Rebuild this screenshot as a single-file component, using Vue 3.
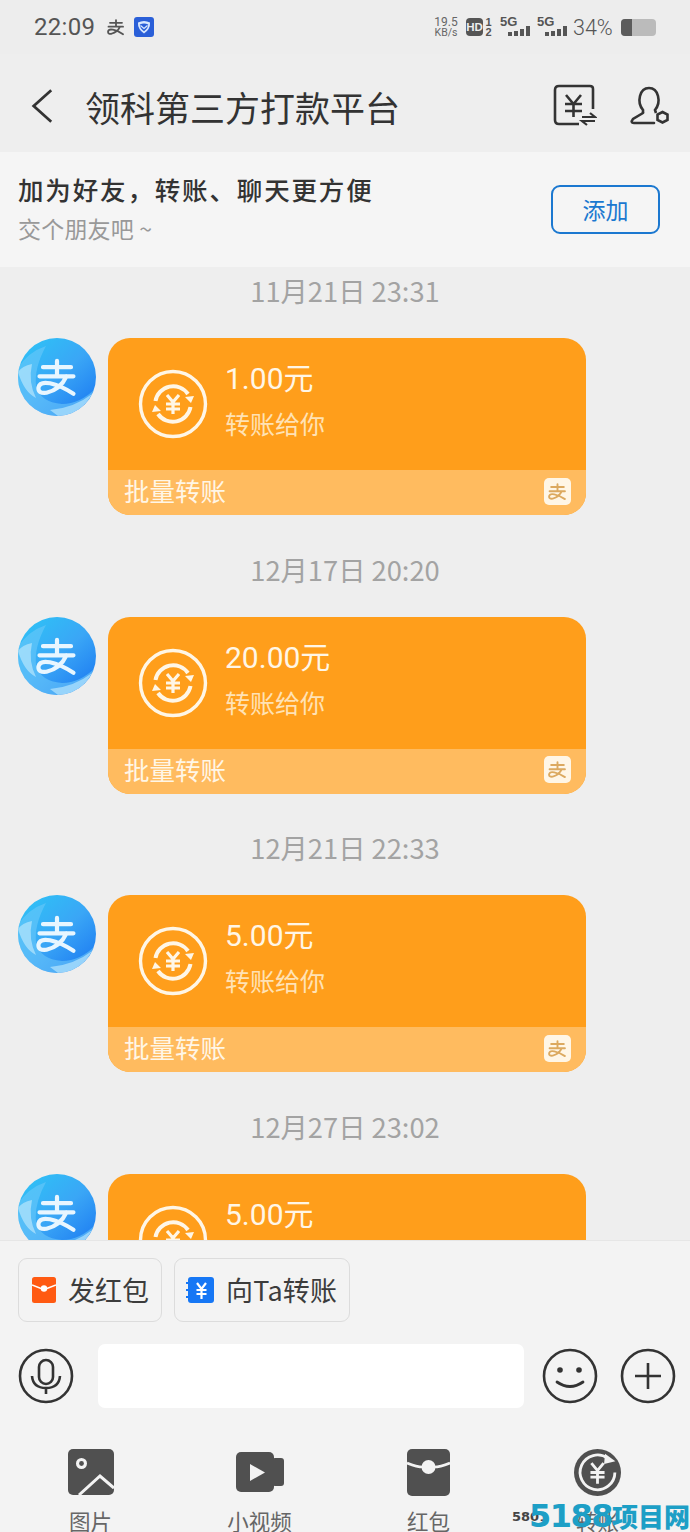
<template>
  <div class="phone">
    <svg class="defs">
      <symbol id="zhi-mark" viewBox="60 70 130 120">
        <path
          d="M85 102H165M75 128H172M125 84V128M152 128Q135 165 95 175Q70 178 72 160Q76 142 105 148Q135 154 172 178"
          fill="none"
          stroke="currentColor"
          stroke-width="12"
          stroke-linecap="round"
        />
      </symbol>
    </svg>

    <div class="status">
      <div class="status-left">
        <span class="clock">22:09</span>
        <svg class="status-zhi"><use href="#zhi-mark" /></svg>
        <svg class="shield" viewBox="0 0 20 20">
          <rect width="20" height="20" rx="3" fill="#2a5fd8" />
          <path d="M4 5.5Q10 2.5 16 5.5Q16.5 12 10 16.5Q3.5 12 4 5.5Z" fill="#d8e8ff" />
          <path d="M5.8 7.4Q10 5.6 14.2 7.4Q14 11.4 10 14.2Q6 11.4 5.8 7.4Z" fill="#2a5fd8" />
          <path d="M6.5 8.6L10 11.4L13.5 8.6" fill="none" stroke="#d8e8ff" stroke-width="1.3" />
        </svg>
      </div>
      <div class="status-right">
        <div class="speed"><span class="speed-num">19.5</span><span>KB/s</span></div>
        <div class="hd">HD</div>
        <div class="sim"><span>1</span><span>2</span></div>
        <div class="signal" v-for="n in 2" :key="n">
          <span class="five-g">5G</span>
          <div class="bars">
            <i v-for="h in [4, 5, 7, 10]" :key="h" :style="{ height: h + 'px' }"></i>
          </div>
        </div>
        <span class="percent">34%</span>
        <div class="battery"><div class="battery-fill"></div></div>
      </div>
    </div>

    <div class="header">
      <svg class="back" viewBox="0 0 26 38">
        <path d="M23 2L4 19L23 36" fill="none" stroke="#333" stroke-width="3" />
      </svg>
      <div class="title">领科第三方打款平台</div>
      <svg class="head-icon bill" viewBox="0 0 44 44">
        <path d="M40 25V5Q40 2 37 2H6Q2 2 2 6V36Q2 40 6 40H26" fill="none" stroke="#333" stroke-width="2.600" />
        <path d="M13 11L20.500 20L28 11M12 20H29M12 27H29M20.500 20V33" fill="none" stroke="#333" stroke-width="2.600" />
        <path d="M29 33H42L37 29M42 37H29L34 41" fill="none" stroke="#333" stroke-width="2.200" />
      </svg>
      <svg class="head-icon person" viewBox="0 0 40 40">
        <path d="M13 27V24Q8 18 10 10Q12 2 19 2Q26 2 28 10Q30 18 25 24L26 27" fill="none" stroke="#333" stroke-width="2.600" />
        <path d="M13 27L3 33Q0 37 4 37H24" fill="none" stroke="#333" stroke-width="2.600" stroke-linecap="round" />
        <path d="M32.500 26L37.500 28.500V34L32.500 36.500L27.500 34V28.500Z" fill="none" stroke="#333" stroke-width="2.600" />
      </svg>
    </div>

    <div class="banner">
      <div>
        <div class="banner-title">加为好友，转账、聊天更方便</div>
        <div class="banner-sub">交个朋友吧 ~</div>
      </div>
      <div class="add-btn">添加</div>
    </div>

    <div class="chat">
      <div class="msg" v-for="m in messages" :key="m.time">
        <div class="time">{{ m.time }}</div>
        <div class="row">
          <svg class="avatar" viewBox="0 0 78 78">
            <defs>
              <linearGradient id="ava-base" x1="0.2" y1="0" x2="0.9" y2="0.8">
                <stop offset="0" stop-color="#2fc0f6" />
                <stop offset="0.55" stop-color="#3aa6f6" />
                <stop offset="1" stop-color="#2283f2" />
              </linearGradient>
              <clipPath id="ava-clip"><circle cx="39" cy="39" r="39" /></clipPath>
            </defs>
            <circle cx="39" cy="39" r="39" fill="url(#ava-base)" />
            <g clip-path="url(#ava-clip)">
              <path d="M0 30Q10 14 28 8Q16 30 18 48Q22 64 44 66Q62 66 78 50V78H0Z" fill="#6fcbf9" opacity="0.55" />
              <path d="M0 34Q6 54 18 60Q10 44 14 26Q4 28 0 34Z" fill="#b6e6fc" opacity="0.7" />
              <path d="M32 72Q56 70 74 56Q62 78 40 78Z" fill="#bfe9fd" opacity="0.65" />
            </g>
            <use href="#zhi-mark" x="16" y="18" width="46" height="42" color="#e8f6ff" />
          </svg>
          <div class="card">
            <div class="card-body">
              <svg class="transfer" viewBox="0 0 70 70">
                <circle cx="35" cy="35" r="32.500" fill="none" stroke="#fff6e6" stroke-width="3.400" />
                <path d="M17.500 32A18 18 0 0 1 50 25" fill="none" stroke="#fff6e6" stroke-width="4" />
                <path d="M52.500 38A18 18 0 0 1 20 45" fill="none" stroke="#fff6e6" stroke-width="4" />
                <path d="M47 28L56 27L53 34Z M23 42L14 43L17 36Z" fill="#fff6e6" />
                <path d="M29 26L35 33L41 26M28 35H42M28 40H42M35 33V45" fill="none" stroke="#fff6e6" stroke-width="3.200" />
              </svg>
              <div>
                <div class="amount">{{ m.amount }}元</div>
                <div class="desc">转账给你</div>
              </div>
            </div>
            <div class="card-foot">
              <span>批量转账</span>
              <svg class="ali-mark" viewBox="0 0 27 27">
                <rect width="27" height="27" rx="5" fill="#fff6e6" />
                <use href="#zhi-mark" x="3" y="4" width="21" height="19" color="#dca95f" />
              </svg>
            </div>
          </div>
        </div>
      </div>
    </div>

    <div class="panel">
      <div class="quick">
        <div class="quick-btn">
          <svg class="quick-icon" viewBox="0 0 24 26">
            <rect width="24" height="26" rx="2.500" fill="#ff5a12" />
            <path d="M0 8L9 11.500H15L24 8" fill="none" stroke="#fff" stroke-width="1.600" />
            <circle cx="12" cy="11.500" r="3.200" fill="#fff" />
          </svg>
          发红包
        </div>
        <div class="quick-btn pay">
          <svg class="quick-icon" viewBox="0 0 28 26">
            <rect x="2" width="26" height="26" rx="3" fill="#1677f5" />
            <path d="M0 6H4M0 13H4M0 20H4" stroke="#1677f5" stroke-width="2" />
            <path d="M11 6L15.500 12L20 6M10.500 13H20.500M10.500 17H20.500M15.500 12V22" fill="none" stroke="#fff" stroke-width="2.200" />
          </svg>
          向Ta转账
        </div>
      </div>

      <div class="input-row">
        <svg class="round-icon voice" viewBox="0 0 56 56">
          <circle cx="28" cy="28" r="26" fill="none" stroke="#333" stroke-width="2.600" />
          <rect x="21" y="12" width="14" height="24" rx="7" fill="none" stroke="#333" stroke-width="2.600" />
          <path d="M14 28Q15 40 28 40Q41 40 42 28M28 40V46" fill="none" stroke="#333" stroke-width="2.600" />
        </svg>
        <div class="input"></div>
        <svg class="round-icon smile" viewBox="0 0 56 56">
          <circle cx="28" cy="28" r="26" fill="none" stroke="#333" stroke-width="2.600" />
          <circle cx="18" cy="22" r="2.800" fill="#333" />
          <circle cx="37" cy="22" r="2.800" fill="#333" />
          <path d="M15 34Q28 43 41 34" fill="none" stroke="#333" stroke-width="2.800" stroke-linecap="round" />
        </svg>
        <svg class="round-icon" viewBox="0 0 56 56">
          <circle cx="28" cy="28" r="26" fill="none" stroke="#333" stroke-width="2.600" />
          <path d="M15 28H41M28 15V41" fill="none" stroke="#333" stroke-width="2.600" />
        </svg>
      </div>

      <div class="tabs">
        <div class="tab">
          <svg class="tab-icon" viewBox="0 0 46 47">
            <rect width="46" height="46" rx="5" fill="#505050" />
            <circle cx="13.500" cy="14.500" r="5.500" fill="#f3f3f3" />
            <circle cx="13.500" cy="14.500" r="2.400" fill="#505050" />
            <path d="M11 46L32 27L46 39" fill="none" stroke="#f3f3f3" stroke-width="3" />
          </svg>
          <span>图片</span>
        </div>
        <div class="tab">
          <svg class="tab-icon" viewBox="0 0 48 47">
            <rect y="3" width="38" height="40" rx="5" fill="#505050" />
            <rect x="36" y="9" width="12" height="28" rx="3" fill="#505050" />
            <path d="M14 15L29 23.500L14 32Z" fill="#f3f3f3" />
          </svg>
          <span>小视频</span>
        </div>
        <div class="tab">
          <svg class="tab-icon" viewBox="0 0 43 47">
            <rect width="43" height="47" rx="5" fill="#505050" />
            <path d="M0 14Q10 18 16 18M27 18Q33 18 43 14" fill="none" stroke="#f3f3f3" stroke-width="2.600" />
            <circle cx="21.500" cy="18" r="7" fill="#f3f3f3" />
          </svg>
          <span>红包</span>
        </div>
        <div class="tab">
          <svg class="tab-icon" viewBox="0 0 50 50">
            <circle cx="25" cy="25" r="25" fill="#505050" />
            <path d="M36 10A18.500 18.500 0 1 0 43.500 25" fill="none" stroke="#f3f3f3" stroke-width="3" />
            <path d="M33 5L44 13L32 16Z" fill="#f3f3f3" />
            <path d="M18.500 15L25 23L31.500 15M17.500 25H32.500M17.500 30H32.500M25 23V37" fill="none" stroke="#f3f3f3" stroke-width="3" />
          </svg>
          <span>转账</span>
        </div>
      </div>
    </div>

    <div class="watermark">
      <span class="wm-small">5801</span>
      <span class="wm-big"><span class="wm-num">5188</span>项目网</span>
    </div>
  </div>
</template>

<script setup>
const messages = [
  { time: "11月21日 23:31", amount: "1.00" },
  { time: "12月17日 20:20", amount: "20.00" },
  { time: "12月21日 22:33", amount: "5.00" },
  { time: "12月27日 23:02", amount: "5.00" },
];
</script>

<style>
html,
body {
  overflow: hidden;
}
</style>

<style scoped>
.phone {
  position: relative;
  display: flex;
  flex-direction: column;
  width: 690px;
  height: 1532px;
  overflow: hidden;
  background: #eeeeee;
  font-family: "Noto Sans CJK SC", "Noto Sans", sans-serif;
}

.defs {
  position: absolute;
  width: 0;
  height: 0;
}

.status {
  flex: none;
  display: flex;
  justify-content: space-between;
  align-items: center;
  height: 54px;
  padding: 0 34px;
  background: #ededed;
  color: #555;
}

.status-left,
.status-right {
  display: flex;
  align-items: center;
}

.clock {
  font-family: Roboto, sans-serif;
  font-size: 24px;
  letter-spacing: 0.3px;
}

.status-zhi {
  width: 20px;
  height: 18px;
  margin-left: 11px;
}

.shield {
  width: 20px;
  height: 20px;
  margin-left: 8px;
}

.speed {
  display: flex;
  flex-direction: column;
  align-items: center;
  width: 24px;
  font-family: Roboto, sans-serif;
  font-size: 10.500px;
  line-height: 10px;
  color: #666;
}

.speed-num {
  font-size: 12px;
  line-height: 12px;
}

.hd {
  width: 17px;
  height: 18px;
  margin-left: 8px;
  border-radius: 4px;
  background: #555;
  color: #eee;
  font-family: "Liberation Sans", sans-serif;
  font-size: 11.500px;
  font-weight: 700;
  line-height: 18px;
  text-align: center;
}

.sim {
  display: flex;
  flex-direction: column;
  width: 9px;
  margin-left: 1px;
  font-family: "Liberation Sans", sans-serif;
  font-size: 11px;
  font-weight: 700;
  line-height: 10px;
  text-align: center;
}

.signal {
  position: relative;
  width: 30px;
  height: 20px;
  margin-left: 7px;
}

.five-g {
  position: absolute;
  top: -3px;
  left: 0;
  font-family: "Liberation Sans", sans-serif;
  font-size: 13px;
  font-weight: 700;
}

.bars {
  position: absolute;
  right: 0;
  bottom: 1px;
  display: flex;
  align-items: flex-end;
  gap: 2px;
}

.bars i {
  display: block;
  width: 4px;
  background: #555;
}

.percent {
  width: 41px;
  margin-left: 6px;
  font-family: Roboto, sans-serif;
  font-size: 21.500px;
  font-weight: 300;
}

.battery {
  width: 35px;
  height: 17px;
  margin-left: 7px;
  overflow: hidden;
  border-radius: 4px;
  background: #bbb;
}

.battery-fill {
  width: 11px;
  height: 100%;
  background: #5c5c5c;
}

.header {
  flex: none;
  display: flex;
  align-items: center;
  height: 92px;
  padding: 6px 20px 0 30px;
  background: #eeeeee;
}

.back {
  width: 24px;
  height: 36px;
}

.title {
  flex: 1;
  margin-left: 31px;
  color: #333;
  font-size: 35px;
  font-weight: 400;
  white-space: nowrap;
}

.head-icon {
  flex: none;
}

.bill {
  width: 44px;
  height: 44px;
}

.person {
  width: 40px;
  height: 40px;
  margin-left: 33px;
}

.banner {
  flex: none;
  display: flex;
  justify-content: space-between;
  align-items: center;
  height: 115px;
  padding: 0 30px 0 18px;
  background: #f5f5f5;
}

.banner-title {
  margin-top: -4px;
  color: #333;
  font-size: 25.500px;
  font-weight: 500;
  letter-spacing: 1.850px;
  line-height: 36px;
}

.banner-sub {
  margin-top: 5px;
  color: #999;
  font-size: 23px;
  line-height: 32px;
  letter-spacing: 0.2px;
}

.add-btn {
  width: 109px;
  height: 49px;
  box-sizing: border-box;
  border: 2px solid #1b78d0;
  border-radius: 9px;
  color: #1b78d0;
  font-size: 23px;
  line-height: 45px;
  text-align: center;
}

.chat {
  flex: 1;
  min-height: 0;
  overflow: hidden;
  background: #eeeeee;
}

.msg {
  margin-bottom: 30.670px;
}

.time {
  height: 48px;
  margin-bottom: 23px;
  color: #a3a3a3;
  font-size: 27.300px;
  line-height: 47px;
  text-align: center;
}

.row {
  display: flex;
  gap: 12px;
  padding-left: 18px;
}

.avatar {
  flex: none;
  width: 78px;
  height: 78px;
}

.card {
  width: 478px;
  overflow: hidden;
  border-radius: 22px;
  background: #ff9e1b;
}

.card-body {
  display: flex;
  align-items: center;
  gap: 17px;
  height: 132px;
  padding-left: 30px;
}

.transfer {
  flex: none;
  width: 70px;
  height: 70px;
}

.amount {
  margin-top: -6px;
  color: #fff6e6;
  font-family: Roboto, "Noto Sans CJK SC", sans-serif;
  font-size: 30px;
  line-height: 40px;
}

.desc {
  margin-top: 4px;
  color: #ffe2b5;
  font-size: 25px;
  line-height: 40px;
}

.card-foot {
  display: flex;
  justify-content: space-between;
  align-items: center;
  height: 45px;
  padding: 0 15px 0 16px;
  background: #ffbb5f;
  color: #fff6e6;
  font-size: 25.500px;
  line-height: 40px;
}

.card-foot span {
  margin-top: -5px;
}

.ali-mark {
  width: 27px;
  height: 27px;
  margin-top: -3px;
}

.panel {
  flex: none;
  height: 292px;
  box-sizing: border-box;
  overflow: hidden;
  border-top: 1px solid #e6e6e6;
  background: #f3f3f3;
}

.quick {
  display: flex;
  gap: 12px;
  padding: 17px 0 0 18px;
}

.quick-btn {
  display: flex;
  align-items: center;
  height: 64px;
  box-sizing: border-box;
  padding: 0 12px 0 13px;
  border: 1px solid #dcdcdc;
  border-radius: 9px;
  color: #3c3c3c;
  font-size: 27px;
  line-height: 40px;
  white-space: nowrap;
}

.pay {
  padding-left: 11px;
  letter-spacing: 0.2px;
}

.quick-icon {
  height: 26px;
  margin-right: 12px;
}

.input-row {
  display: flex;
  align-items: center;
  height: 64px;
  margin-top: 22px;
  padding-left: 18px;
}

.round-icon {
  flex: none;
  width: 56px;
  height: 56px;
  margin-right: 22px;
}

.voice {
  margin-right: 24px;
}

.input {
  flex: none;
  width: 426px;
  height: 64px;
  margin-right: 18px;
  border-radius: 7px;
  background: #fff;
}

.tabs {
  display: grid;
  grid-template-columns: repeat(4, 169px);
  margin-top: 41px;
  padding-left: 6px;
}

.tab {
  display: flex;
  flex-direction: column;
  align-items: center;
  color: #666;
  font-size: 21.500px;
}

.tab-icon {
  height: 47px;
}

.tab span {
  margin-top: 9px;
  line-height: 32px;
}

.watermark {
  position: absolute;
  right: 0;
  bottom: 0;
  width: 178px;
  height: 30px;
}

.wm-small {
  position: absolute;
  left: 0;
  top: 6px;
  color: #444;
  font-family: "DejaVu Sans", sans-serif;
  font-size: 13px;
  font-weight: 700;
  line-height: 18px;
}

.wm-big {
  position: absolute;
  right: 0;
  top: -6px;
  color: #1d9fc6;
  font-size: 26px;
  font-weight: 900;
  line-height: 40px;
  white-space: nowrap;
}

.wm-num {
  font-family: "DejaVu Sans", sans-serif;
  font-size: 32px;
  font-weight: 700;
  letter-spacing: -1.500px;
}
</style>
